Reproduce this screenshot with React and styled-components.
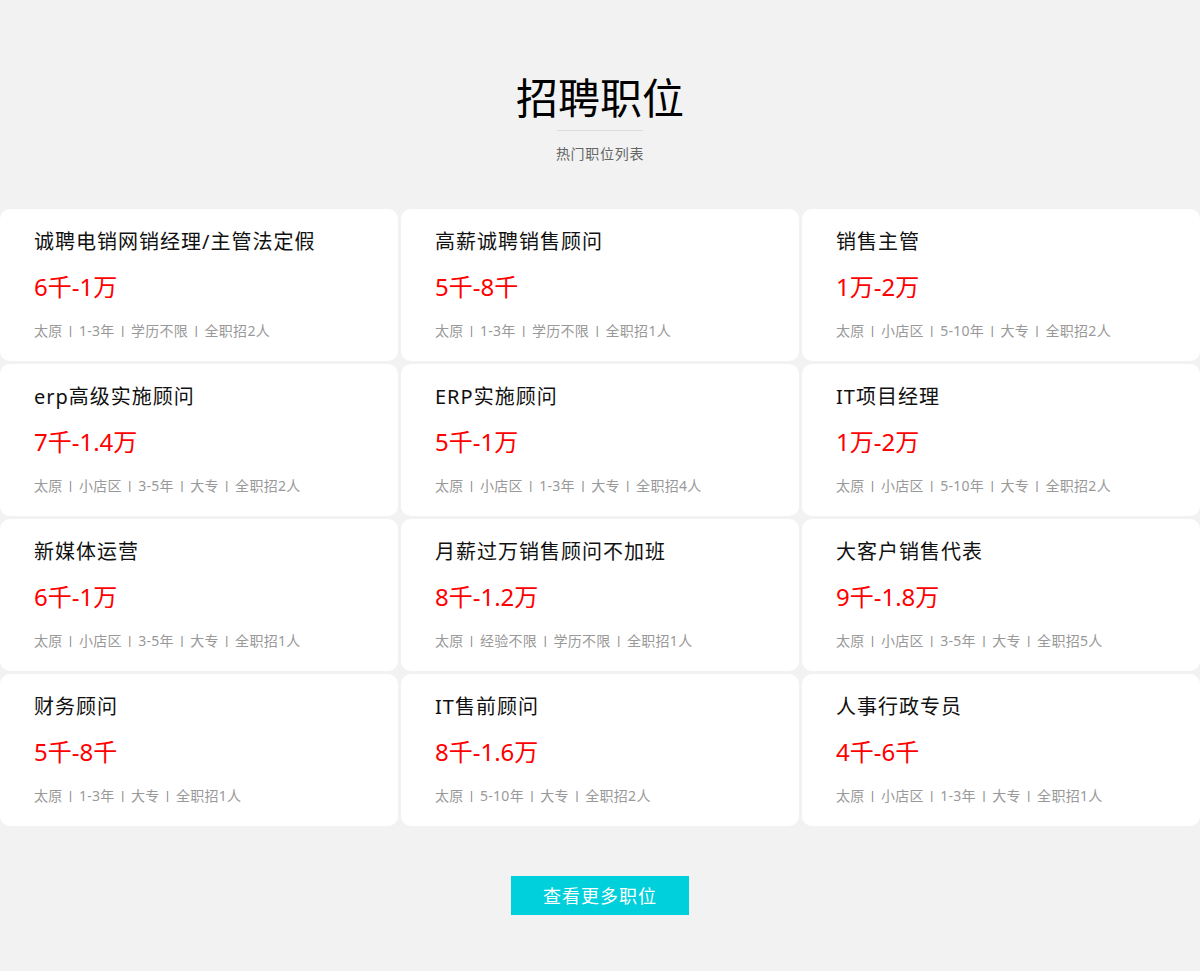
import styled, { createGlobalStyle } from "styled-components"

const jobs = [
  { title: "诚聘电销网销经理/主管法定假", salary: "6千-1万", meta: ["太原", "1-3年", "学历不限", "全职招2人"] },
  { title: "高薪诚聘销售顾问", salary: "5千-8千", meta: ["太原", "1-3年", "学历不限", "全职招1人"] },
  { title: "销售主管", salary: "1万-2万", meta: ["太原", "小店区", "5-10年", "大专", "全职招2人"] },
  { title: "erp高级实施顾问", salary: "7千-1.4万", meta: ["太原", "小店区", "3-5年", "大专", "全职招2人"] },
  { title: "ERP实施顾问", salary: "5千-1万", meta: ["太原", "小店区", "1-3年", "大专", "全职招4人"] },
  { title: "IT项目经理", salary: "1万-2万", meta: ["太原", "小店区", "5-10年", "大专", "全职招2人"] },
  { title: "新媒体运营", salary: "6千-1万", meta: ["太原", "小店区", "3-5年", "大专", "全职招1人"] },
  { title: "月薪过万销售顾问不加班", salary: "8千-1.2万", meta: ["太原", "经验不限", "学历不限", "全职招1人"] },
  { title: "大客户销售代表", salary: "9千-1.8万", meta: ["太原", "小店区", "3-5年", "大专", "全职招5人"] },
  { title: "财务顾问", salary: "5千-8千", meta: ["太原", "1-3年", "大专", "全职招1人"] },
  { title: "IT售前顾问", salary: "8千-1.6万", meta: ["太原", "5-10年", "大专", "全职招2人"] },
  { title: "人事行政专员", salary: "4千-6千", meta: ["太原", "小店区", "1-3年", "大专", "全职招1人"] },
]

export default function App() {
  return (
    <>
      <GlobalStyle />
      <Page>
        <Heading>招聘职位</Heading>
        <Rule />
        <SubTitle>热门职位列表</SubTitle>
        <Grid>
          {jobs.map((job, index) => (
            <Card key={index}>
              <JobTitle>{job.title}</JobTitle>
              <Salary>{job.salary}</Salary>
              <Meta>
                {job.meta.map((m, i) => (
                  <span key={i}>
                    {i > 0 && <Sep>丨</Sep>}
                    {m}
                  </span>
                ))}
              </Meta>
            </Card>
          ))}
        </Grid>
        <MoreButton>查看更多职位</MoreButton>
      </Page>
    </>
  )
}

const GlobalStyle = createGlobalStyle`
  body {
    margin: 0;
    background: #f2f2f2;
    font-family: "Noto Sans", "Noto Sans CJK SC", sans-serif;
  }
`
const Page = styled.section`
  display: flex;
  flex-direction: column;
  align-items: center;
  padding: 72px 0 56px;
`
const Heading = styled.h2`
  margin: 0;
  font-size: 42px;
  line-height: 52px;
  font-weight: 400;
  color: #000;
`
const Rule = styled.div`
  width: 86px;
  height: 1px;
  background: #dcdcdc;
  margin-top: 6px;
`
const SubTitle = styled.p`
  margin: 13px 0 0;
  font-size: 14px;
  line-height: 20px;
  letter-spacing: 0.7px;
  color: #666;
`
const Grid = styled.div`
  margin-top: 45px;
  width: 100%;
  display: grid;
  grid-template-columns: repeat(3, 1fr);
  column-gap: 3px;
  row-gap: 3.5px;
`
const Card = styled.div`
  background: #fff;
  border-radius: 10px;
  height: 151.5px;
  box-sizing: border-box;
  padding: 19px 34px 0;
`
const JobTitle = styled.div`
  font-size: 20px;
  line-height: 28px;
  letter-spacing: 1px;
  color: #111;
`
const Salary = styled.div`
  margin-top: 16px;
  font-size: 24px;
  line-height: 30px;
  color: #ff0000;
`
const Meta = styled.div`
  margin-top: 19px;
  font-size: 14px;
  line-height: 20px;
  letter-spacing: 0.3px;
  color: #999;
`
const Sep = styled.span`
  margin: 0 2px;
  color: #888;
  font-size: 12px;
`
const MoreButton = styled.button`
  margin-top: 50px;
  width: 178px;
  height: 39px;
  border: none;
  background: #00d0dc;
  color: #fff;
  font-family: inherit;
  font-size: 18px;
  letter-spacing: 1px;
  cursor: pointer;
`
